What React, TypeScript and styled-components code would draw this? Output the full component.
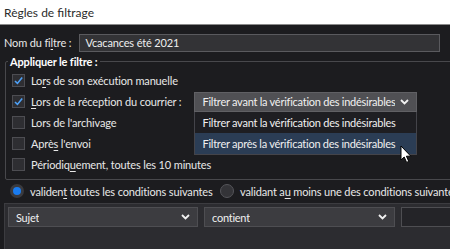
import styled, { createGlobalStyle } from "styled-components";

const GlobalStyle = createGlobalStyle`
  html, body {
    margin: 0;
    padding: 0;
    background: #1c1c1f;
    overflow: hidden;
  }
  body {
    font-family: Lato, "Noto Sans", sans-serif;
    font-size: 11px;
    letter-spacing: -0.15px;
    color: #e6e6e6;
  }
`;

const Window = styled.div`
  width: 470px;
  display: flex;
  flex-direction: column;
  background: #1c1c1f;

  & > * {
    flex-shrink: 0;
  }
`;

const TitleBar = styled.div`
  height: 24px;
  background: #ffffff;
  color: #2b2b2b;
  font-size: 12px;
  letter-spacing: 0;
  display: flex;
  align-items: center;
  padding-left: 4px;
  border-bottom: 1px solid #8a8a8a;
`;

const Body = styled.div`
  display: flex;
  flex-direction: column;
  padding: 8px 0 0 4px;
`;

const NameRow = styled.div`
  display: flex;
  align-items: center;
  gap: 8px;
  height: 19px;
`;

const TextInput = styled.div`
  width: 361px;
  height: 18px;
  background: #333336;
  border: 1px solid #5a5a5e;
  display: flex;
  align-items: center;
  padding-left: 5px;
  box-sizing: border-box;
  color: #eeeeee;
`;

const Fieldset = styled.fieldset`
  margin: 3px 0 0 1px;
  padding: 2px 0 4px 6px;
  border: 1px solid #48484c;
  border-radius: 2px;
  width: 480px;
  box-sizing: border-box;
  display: flex;
  flex-direction: column;
`;

const Legend = styled.legend`
  font-weight: 700;
  color: #ffffff;
  padding: 0 2px;
  margin-left: -4px;
`;

const Row = styled.div`
  display: flex;
  align-items: center;
  height: 21px;
  gap: 6px;
`;

const Box = styled.span`
  width: 13px;
  height: 13px;
  box-sizing: border-box;
  border: 1px solid #4d4d52;
  background: #2e2e32;
  display: flex;
  align-items: center;
  justify-content: center;
  flex-shrink: 0;
`;

const Label = styled.span`
  white-space: nowrap;
  color: #e8e8e8;
`;

const U = styled.span`
  text-decoration: underline;
  text-underline-offset: 2px;
`;

const SelectWrap = styled.div`
  position: relative;
  margin-left: 7px;
`;

const Select = styled.div<{ $w: number; $tone?: "light" | "panel" }>`
  width: ${(p) => p.$w}px;
  height: 20px;
  box-sizing: border-box;
  background: ${(p) => (p.$tone === "light" ? "#505054" : "#3c3c40")};
  border: 1px solid ${(p) => (p.$tone === "light" ? "#606064" : "#4e4e52")};
  display: flex;
  align-items: center;
  justify-content: space-between;
  gap: 5px;
  padding: 0 7px 0 7px;
  color: #f0f0f0;
  white-space: nowrap;
`;

const SelectText = styled.span`
  overflow: hidden;
  letter-spacing: -0.25px;
`;

const Menu = styled.div`
  position: absolute;
  top: 20px;
  left: 0;
  width: 223px;
  box-sizing: border-box;
  background: #1e1e22;
  border: 1px solid #44444a;
  border-top: none;
  z-index: 5;
`;

const MenuItem = styled.div<{ $hover?: boolean }>`
  height: 21px;
  display: flex;
  align-items: center;
  padding-left: 7px;
  letter-spacing: -0.25px;
  background: ${(p) => (p.$hover ? "#2b3d55" : "transparent")};
  color: #f0f0f0;
  white-space: nowrap;
`;

const Cursor = styled.svg`
  position: absolute;
  left: 206px;
  top: 53px;
  z-index: 6;
`;

const RadioRow = styled.div`
  display: flex;
  align-items: center;
  height: 22px;
  padding-left: 6px;
`;

const RadioItem = styled.div<{ $w?: number }>`
  display: flex;
  align-items: center;
  gap: 6px;
  width: ${(p) => (p.$w ? `${p.$w}px` : "auto")};
  white-space: nowrap;
`;

const Radio = styled.span<{ $on?: boolean }>`
  width: 14px;
  height: 14px;
  border-radius: 50%;
  box-sizing: border-box;
  border: ${(p) => (p.$on ? "3px solid #3a3a3e" : "1px solid #55555a")};
  background: ${(p) => (p.$on ? "#1a7cf0" : "#343438")};
  flex-shrink: 0;
`;

const Panel = styled.div`
  margin-top: 1px;
  height: 60px;
  background: #2c2c30;
  border: 1px solid #3c3c40;
  border-right: none;
  display: flex;
  gap: 6px;
  padding: 3px 0 0 3px;
`;

const Field = styled.div`
  flex: 1;
  height: 20px;
  background: #242428;
  border: 1px solid #4e4e52;
  box-sizing: border-box;
`;

function Check({ checked }: { checked?: boolean }) {
  return (
    <Box>
      {checked && (
        <svg width="11" height="11" viewBox="0 0 11 11">
          <path d="M2 6 L4.4 8.4 L9.2 2.4" fill="none" stroke="#4ea1f7" strokeWidth="1.6" />
        </svg>
      )}
    </Box>
  );
}

function Chevron() {
  return (
    <svg width="9" height="6" viewBox="0 0 9 6" style={{ flexShrink: 0 }}>
      <path d="M1 1 L4.5 4.5 L8 1" fill="none" stroke="#f2f2f2" strokeWidth="1.8" />
    </svg>
  );
}

export default function App() {
  return (
    <Window>
      <GlobalStyle />
      <TitleBar>Règles de filtrage</TitleBar>
      <Body>
        <NameRow>
          <Label>
            Nom du fi<U>l</U>tre :
          </Label>
          <TextInput>Vcacances été 2021</TextInput>
        </NameRow>

        <Fieldset>
          <Legend>Appliquer le filtre :</Legend>
          <Row>
            <Check checked />
            <Label>
              Lo<U>r</U>s de son exécution manuelle
            </Label>
          </Row>
          <Row>
            <Check checked />
            <Label>
              <U>L</U>ors de la réception du courrier :
            </Label>
            <SelectWrap>
              <Select $w={223} $tone="light">
                <SelectText>Filtrer avant la vérification des indésirables</SelectText>
                <Chevron />
              </Select>
              <Menu>
                <MenuItem>Filtrer avant la vérification des indésirables</MenuItem>
                <MenuItem $hover>Filtrer après la vérification des indésirables</MenuItem>
              </Menu>
              <Cursor width="12" height="19" viewBox="0 0 12 19">
                <path
                  d="M1 1 L1 15 L4.2 12 L6.6 17.4 L8.8 16.4 L6.4 11.2 L10.8 11.2 Z"
                  fill="#ffffff"
                  stroke="#000000"
                  strokeWidth="1"
                />
              </Cursor>
            </SelectWrap>
          </Row>
          <Row>
            <Check />
            <Label>Lors de l'archivage</Label>
          </Row>
          <Row>
            <Check />
            <Label>
              Aprè<U>s</U> l'envoi
            </Label>
          </Row>
          <Row>
            <Check />
            <Label>
              Périodiq<U>u</U>ement, toutes les 10 minutes
            </Label>
          </Row>
        </Fieldset>

        <RadioRow>
          <RadioItem $w={210}>
            <Radio $on />
            <Label>
              validen<U>t</U> toutes les conditions suivantes
            </Label>
          </RadioItem>
          <RadioItem>
            <Radio />
            <Label>
              validant a<U>u</U> moins une des conditions suivantes
            </Label>
          </RadioItem>
        </RadioRow>

        <Panel>
          <Select $w={190}>
            <SelectText>Sujet</SelectText>
            <Chevron />
          </Select>
          <Select $w={191}>
            <SelectText>contient</SelectText>
            <Chevron />
          </Select>
          <Field />
        </Panel>
      </Body>
    </Window>
  );
}
